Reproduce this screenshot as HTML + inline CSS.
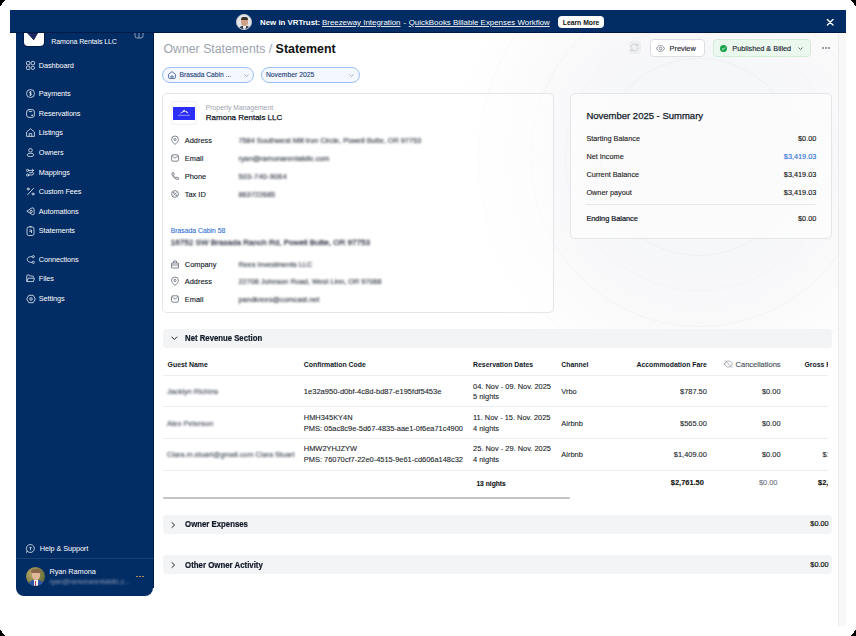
<!DOCTYPE html>
<html><head><meta charset="utf-8">
<style>
*{box-sizing:border-box;margin:0;padding:0}
html,body{width:856px;height:636px;overflow:hidden;background:#fff}
body{position:relative;font-family:"Liberation Sans",sans-serif;color:#111827}
.a{position:absolute}
.t{position:absolute;white-space:nowrap;line-height:12px;height:12px}
.nav{color:#fff;font-size:7.3px;letter-spacing:-0.08px}
.blur{color:#2b323d;filter:blur(0.8px);-webkit-text-stroke:0}
.lbl{font-size:7.4px;color:#111827;-webkit-text-stroke:0.12px #111827}
.val{font-size:7.3px;-webkit-text-stroke:0.12px currentColor}
.th{font-size:6.9px;font-weight:bold;color:#111827}
.td{font-size:7.45px;color:#1a1f2b;-webkit-text-stroke:0.1px currentColor}
.ico{position:absolute;overflow:visible}
</style></head><body>

<!-- main background -->
<div class="a" style="left:153px;top:33px;width:693px;height:593px;background:radial-gradient(circle at 546px 124px,#f5f6f8 0px,#f6f7f8 100px,#f8f8fa 135px,#fafafb 172px,#fdfdfd 215px,#ffffff 250px)"></div>
<!-- decorative circles -->
<div class="a" style="left:153px;top:33px;width:685px;height:593px;overflow:hidden">
  <div class="a" style="left:447.4px;top:25.4px;width:197.2px;height:197.2px;border:1px solid rgba(215,220,235,.28);border-radius:50%"></div>
  <div class="a" style="left:411.8px;top:-10.2px;width:268.4px;height:268.4px;border:1px solid rgba(215,220,235,.18);border-radius:50%"></div>
  <div class="a" style="left:376.5px;top:-45.5px;width:339px;height:339px;border:1px solid rgba(215,220,235,.22);border-radius:50%"></div>
  <div class="a" style="left:325px;top:-97px;width:442px;height:442px;border:1px solid rgba(215,220,235,.18);border-radius:50%"></div>
</div>
<!-- sidebar -->
<div class="a" style="left:16px;top:10px;width:137.3px;height:586.2px;background:#022c64;border-radius:0 0 8px 8px"></div>
<div class="a" style="left:152.6px;top:33px;width:1px;height:555px;background:#001a4d"></div>
<!-- logo -->
<div class="a" style="left:23.5px;top:24px;width:20.7px;height:21.8px;background:#fff;border-radius:4px;box-shadow:0 0 0 1px #001a4a"></div>
<svg class="ico" style="left:20px;top:30px" width="30" height="20" viewBox="0 0 30 20"><path d="M7.6 3 L17.6 3 L13.7 9.8 Z" fill="#1f2a64" stroke="#0b1446" stroke-width="0.8" stroke-linejoin="round"/></svg>
<div class="t nav" style="left:51.3px;top:35.8px;font-size:7px">Ramona Rentals LLC</div>
<svg class="ico" style="left:134px;top:30px" width="10" height="10" viewBox="0 0 10 10" fill="none" stroke="#9aa6c0" stroke-width="0.9"><rect x="1" y="-2" width="8" height="10" rx="2"/><path d="M5 -2 V8"/></svg>

<!-- nav icons -->
<svg class="ico" style="left:26px;top:61px" width="9" height="9" viewBox="0 0 9 9" fill="none" stroke="#e8ecf3" stroke-width="0.8"><rect x="0.5" y="0.5" width="3.3" height="3.3" rx="0.8"/><rect x="5.2" y="0.5" width="3.3" height="3.3" rx="0.8"/><rect x="0.5" y="5.2" width="3.3" height="3.3" rx="0.8"/><rect x="5.2" y="5.2" width="3.3" height="3.3" rx="1.6"/></svg>
<div class="t nav" style="left:38.8px;top:59.9px">Dashboard</div>

<svg class="ico" style="left:26px;top:89px" width="9" height="9" viewBox="0 0 9 9" fill="none" stroke="#e8ecf3" stroke-width="0.8"><circle cx="4.5" cy="4.5" r="4"/><path d="M5.6 3.2 C5.2 2.6 3.4 2.6 3.4 3.6 C3.4 4.6 5.6 4.2 5.6 5.4 C5.6 6.4 3.6 6.4 3.3 5.8 M4.5 2.2 V6.8"/></svg>
<div class="t nav" style="left:38.8px;top:87.7px">Payments</div>

<svg class="ico" style="left:26px;top:108.5px" width="9" height="9" viewBox="0 0 9 9" fill="none" stroke="#e8ecf3" stroke-width="0.8" stroke-linecap="round"><rect x="0.6" y="0.6" width="7.8" height="7.8" rx="2.4"/><path d="M3.2 2.6 H5.8"/><circle cx="6" cy="6.2" r="0.35" fill="#e8ecf3"/></svg>
<div class="t nav" style="left:38.8px;top:107.5px">Reservations</div>

<svg class="ico" style="left:26px;top:128px" width="9" height="9" viewBox="0 0 9 9" fill="none" stroke="#e8ecf3" stroke-width="0.8"><path d="M0.6 4 L4.5 0.7 L8.4 4 V8.4 H0.6 Z"/><path d="M3.2 8.4 V5.6 H5.8 V8.4"/></svg>
<div class="t nav" style="left:38.8px;top:127.1px">Listings</div>

<svg class="ico" style="left:26px;top:148px" width="9" height="9" viewBox="0 0 9 9" fill="none" stroke="#e8ecf3" stroke-width="0.8"><circle cx="4.5" cy="2.3" r="1.8"/><ellipse cx="4.5" cy="6.9" rx="3.3" ry="1.7"/></svg>
<div class="t nav" style="left:38.8px;top:146.7px">Owners</div>

<svg class="ico" style="left:26px;top:167.5px" width="9" height="9" viewBox="0 0 9 9" fill="none" stroke="#e8ecf3" stroke-width="0.8" stroke-linecap="round" stroke-linejoin="round"><circle cx="1.6" cy="2.4" r="1.1"/><circle cx="1.6" cy="7" r="1.1"/><path d="M2.7 2.4 H7.6 M6.4 1.2 L7.6 2.4 L6.4 3.6 M2.7 7 H5 Q7.8 7 7.8 5.6 Q7.8 4.6 6.4 4.6 H3.5"/></svg>
<div class="t nav" style="left:38.8px;top:166.5px">Mappings</div>

<svg class="ico" style="left:26px;top:187px" width="9" height="9" viewBox="0 0 9 9" fill="none" stroke="#e8ecf3" stroke-width="0.8" stroke-linecap="round"><path d="M7.6 1.2 L1.6 7.8"/><circle cx="2.2" cy="2" r="1"/><circle cx="7" cy="7" r="1"/></svg>
<div class="t nav" style="left:38.8px;top:186.2px">Custom Fees</div>

<svg class="ico" style="left:26px;top:206.5px" width="9" height="9" viewBox="0 0 9 9" fill="none" stroke="#e8ecf3" stroke-width="0.8" stroke-linejoin="round"><path d="M0.8 4.2 L6 0.9 Q7.8 0.4 8 2.2 L8.2 6.6 Q8 8.2 6.4 7.6 Z"/><circle cx="5.2" cy="4.4" r="1.1"/></svg>
<div class="t nav" style="left:38.8px;top:205.8px">Automations</div>

<svg class="ico" style="left:26px;top:226px" width="9" height="10" viewBox="0 0 9 10" fill="none" stroke="#e8ecf3" stroke-width="0.8"><rect x="1" y="1" width="7" height="8.5" rx="1.8"/><path d="M3.3 0.6 H5.7 M3.5 4 H5.5 V7 M3.5 5.5 H4.8"/></svg>
<div class="t nav" style="left:38.8px;top:225.3px">Statements</div>

<svg class="ico" style="left:26px;top:254.5px" width="9" height="9" viewBox="0 0 9 9" fill="none" stroke="#e8ecf3" stroke-width="0.8"><path d="M6.1 1.6 C3.5 1.4 1.2 2.6 1.2 4.5 C1.2 6.4 3.5 7.6 6.1 7.4"/><circle cx="7.3" cy="1.7" r="1.1"/><circle cx="7.3" cy="7.3" r="1.1"/></svg>
<div class="t nav" style="left:38.8px;top:253.7px">Connections</div>

<svg class="ico" style="left:26px;top:274px" width="9" height="9" viewBox="0 0 9 9" fill="none" stroke="#e8ecf3" stroke-width="0.8" stroke-linejoin="round"><path d="M0.8 7.6 V1.8 Q0.8 1 1.6 1 H3.2 L4.2 2 H6.6 Q7.4 2 7.4 2.8 V3.6"/><path d="M0.8 7.6 L2.2 4.2 H8.4 L7.4 7.6 Z"/></svg>
<div class="t nav" style="left:38.8px;top:273.2px">Files</div>

<svg class="ico" style="left:25.5px;top:293.5px" width="10" height="10" viewBox="0 0 10 10" fill="none" stroke="#e8ecf3" stroke-width="0.8" stroke-linejoin="round"><path d="M0.7 5 L2.8 1.3 H7.2 L9.3 5 L7.2 8.7 H2.8 Z"/><circle cx="5" cy="5" r="1.3"/></svg>
<div class="t nav" style="left:38.8px;top:293.0px">Settings</div>

<svg class="ico" style="left:25.8px;top:543.8px" width="9" height="9" viewBox="0 0 9 9" fill="none" stroke="#e8ecf3" stroke-width="0.8"><path d="M4.5 0.5 A4 4 0 1 1 1.5 7.3 L0.6 8.5 L1 6.6 A4 4 0 0 1 4.5 0.5 Z"/><path d="M4.5 6.3 V3.2 M3.3 4.2 L4.5 2.9 L5.7 4.2"/></svg>
<div class="t nav" style="left:39.8px;top:542.9px;font-size:7.3px">Help &amp; Support</div>
<div class="a" style="left:16px;top:558px;width:137.5px;height:1px;background:#1e4173"></div>

<!-- avatar -->
<div class="a" style="left:25.5px;top:567px;width:19px;height:19px;border-radius:50%;background:radial-gradient(circle at 30% 35%,#b9a46a 0,#8e8a4c 40%,#5f6a3a 80%);overflow:hidden">
  <div class="a" style="left:6px;top:3px;width:8.5px;height:10px;border-radius:45%;background:#e2b79a"></div>
  <div class="a" style="left:5.5px;top:2px;width:9.5px;height:4px;border-radius:5px 5px 2px 2px;background:#8a6a4a"></div>
  <div class="a" style="left:2px;top:13px;width:16px;height:8px;border-radius:6px 6px 0 0;background:#2e55a8"></div>
  <div class="a" style="left:8.5px;top:13px;width:3.5px;height:6px;background:#f4f4f6"></div>
  <div class="a" style="left:9.6px;top:14px;width:1.3px;height:5px;background:#b03a5a"></div>
</div>
<div class="t nav" style="left:49.4px;top:566.3px;font-size:7.35px;letter-spacing:-0.05px">Ryan Ramona</div>
<div class="t blur" style="left:49.4px;top:576px;font-size:6.75px;color:#8d9bb8">ryan@ramonarentalsllc.c...</div>
<div class="a" style="left:136px;top:575.6px;width:1.6px;height:1.6px;border-radius:50%;background:#c49a5e"></div>
<div class="a" style="left:139px;top:575.6px;width:1.6px;height:1.6px;border-radius:50%;background:#c49a5e"></div>
<div class="a" style="left:142px;top:575.6px;width:1.6px;height:1.6px;border-radius:50%;background:#c49a5e"></div>

<!-- banner -->
<div class="a" style="left:10px;top:10px;width:836px;height:23px;background:#022c64;border-bottom:1px solid #001a48"></div>
<div class="a" style="left:236.4px;top:14.1px;width:15.8px;height:15.8px;border-radius:50%;background:#e4e5e8;border:1px solid #c9ccd2;overflow:hidden">
  <div class="a" style="left:0.5px;top:10.5px;width:13px;height:6px;border-radius:5px 5px 0 0;background:#2a3347"></div>
  <div class="a" style="left:5.2px;top:10.5px;width:3.6px;height:3.5px;background:#eef1f5;border-radius:0 0 2px 2px"></div>
  <div class="a" style="left:3.6px;top:2.6px;width:6.8px;height:8.6px;border-radius:48%;background:#cf9f86"></div>
  <div class="a" style="left:3.4px;top:1.8px;width:7.2px;height:3px;border-radius:4px 4px 1px 1px;background:#3a2c26"></div>
</div>
<div class="t" style="left:260.1px;top:16.7px;font-size:7.85px;font-weight:bold;color:#fff">New in VRTrust:</div>
<div class="t" style="left:322px;top:16.7px;font-size:7.9px;color:#fff;text-decoration:underline;text-decoration-color:rgba(255,255,255,.85);text-underline-offset:1px">Breezeway Integration</div>
<div class="t" style="left:403.5px;top:16.7px;font-size:7.9px;color:#fff">-</div>
<div class="t" style="left:408.7px;top:16.7px;font-size:7.9px;color:#fff;text-decoration:underline;text-decoration-color:rgba(255,255,255,.85);text-underline-offset:1px">QuickBooks Billable Expenses Workflow</div>
<div class="a" style="left:558.2px;top:16px;width:45.8px;height:12.3px;background:#fff;border-radius:4px"></div>
<div class="t" style="left:558.2px;top:16.7px;width:45.8px;text-align:center;font-size:6.8px;font-weight:bold;color:#111">Learn More</div>
<svg class="ico" style="left:826px;top:17.6px" width="9" height="9" viewBox="0 0 9 9" fill="none" stroke="#fff" stroke-width="1.35" stroke-linecap="round"><path d="M1.4 1.4 L7 7 M7 1.4 L1.4 7"/></svg>

<!-- vertical scrollbar -->
<div class="a" style="left:838px;top:34px;width:8px;height:592px;background:#f8f8f8;border-left:1px solid #ececec"></div>

<!-- title -->
<div class="t" style="left:163.5px;top:41.5px;height:14px;line-height:14px;font-size:12.3px;color:#9ca3af">Owner Statements / <span style="color:#111;font-weight:bold;font-size:12.45px">Statement</span></div>

<!-- pills -->
<div class="a" style="left:162.4px;top:66.9px;width:91.2px;height:15.9px;border:1px solid #98c0f4;border-radius:8px;background:#f4f8fe"></div>
<svg class="ico" style="left:168.3px;top:70.8px" width="8" height="8" viewBox="0 0 8 8" fill="none" stroke="#274a85" stroke-width="0.75" stroke-linejoin="round"><path d="M0.6 3.3 L4 0.6 L7.4 3.3 V6.6 Q7.4 7.4 6.6 7.4 H1.4 Q0.6 7.4 0.6 6.6 Z"/><path d="M3 7.4 V5 H5 V7.4"/></svg>
<div class="t" style="left:179.5px;top:69.4px;font-size:6.7px;color:#1e3f7a;-webkit-text-stroke:0.12px #1e3f7a">Brasada Cabin ...</div>
<svg class="ico" style="left:243.5px;top:73.5px" width="5" height="3" viewBox="0 0 5 3" fill="none" stroke="#7b8fb5" stroke-width="0.7"><path d="M0.5 0.5 L2.5 2.5 L4.5 0.5"/></svg>
<div class="a" style="left:261px;top:66.9px;width:98.9px;height:15.9px;border:1px solid #98c0f4;border-radius:8px;background:#f4f8fe"></div>
<div class="t" style="left:265.9px;top:69.4px;font-size:6.8px;color:#1e3f7a;-webkit-text-stroke:0.12px #1e3f7a">November 2025</div>
<svg class="ico" style="left:349.3px;top:73.5px" width="5" height="3" viewBox="0 0 5 3" fill="none" stroke="#7b8fb5" stroke-width="0.7"><path d="M0.5 0.5 L2.5 2.5 L4.5 0.5"/></svg>

<!-- action buttons -->
<div class="a" style="left:628.6px;top:41.2px;width:12.8px;height:12.8px;border-radius:3px;background:#f0f1f3;border:1px solid #eceef1"></div>
<svg class="ico" style="left:630.3px;top:43.2px" width="9" height="9" viewBox="0 0 9 9" fill="none" stroke="#c4c7cc" stroke-width="0.8" stroke-linecap="round"><path d="M0.9 4.2 A3.6 3.6 0 0 1 7.6 2.6 M8.1 4.8 A3.6 3.6 0 0 1 1.4 6.4 M7.9 0.9 V2.7 H6.1 M1.1 8.1 V6.3 H2.9"/></svg>
<div class="a" style="left:649.6px;top:39.3px;width:55.7px;height:17.7px;border:1px solid #dcdfe4;border-radius:4px;background:#fff"></div>
<svg class="ico" style="left:656px;top:44.7px" width="9" height="7" viewBox="0 0 9 7" fill="none" stroke="#6b7280" stroke-width="0.75"><path d="M0.5 3.5 C1.7 1.2 3 0.5 4.5 0.5 C6 0.5 7.3 1.2 8.5 3.5 C7.3 5.8 6 6.5 4.5 6.5 C3 6.5 1.7 5.8 0.5 3.5 Z"/><circle cx="4.5" cy="3.5" r="1.3"/></svg>
<div class="t" style="left:669.6px;top:43.2px;font-size:7.35px;color:#1f2937;-webkit-text-stroke:0.15px #1f2937">Preview</div>
<div class="a" style="left:713px;top:39.3px;width:97.7px;height:17.7px;border:1px solid #d3ecd9;border-radius:4px;background:#ebf8ee"></div>
<div class="a" style="left:719.7px;top:44.6px;width:7px;height:7px;border-radius:50%;background:#16a34a"></div>
<svg class="ico" style="left:719.7px;top:44.6px" width="7" height="7" viewBox="0 0 7 7" fill="none" stroke="#fff" stroke-width="0.9"><path d="M2 3.6 L3.1 4.6 L5 2.5"/></svg>
<div class="t" style="left:732.3px;top:43.2px;font-size:7.3px;color:#1f2937;-webkit-text-stroke:0.15px #1f2937">Published &amp; Billed</div>
<svg class="ico" style="left:797.8px;top:47px" width="6" height="4" viewBox="0 0 6 4" fill="none" stroke="#4b5563" stroke-width="0.85"><path d="M0.5 0.5 L2.5 2.5 L4.5 0.5"/></svg>
<div class="a" style="left:822px;top:47.4px;width:1.8px;height:1.8px;border-radius:50%;background:#7d838c"></div>
<div class="a" style="left:825px;top:47.4px;width:1.8px;height:1.8px;border-radius:50%;background:#7d838c"></div>
<div class="a" style="left:828px;top:47.4px;width:1.8px;height:1.8px;border-radius:50%;background:#7d838c"></div>

<!-- left card -->
<div class="a" style="left:162.4px;top:92.5px;width:391.6px;height:220.7px;border:1px solid #e4e6ea;border-radius:5px;background:rgba(255,255,255,.55)"></div>
<div class="a" style="left:171.1px;top:101.1px;width:26.3px;height:24.3px;border:1px solid #f0f1f4;border-radius:4px;background:#fff"></div>
<div class="a" style="left:173.4px;top:107px;width:21.9px;height:12.5px;background:#2d2dfa"></div>
<svg class="ico" style="left:173.4px;top:107px" width="22" height="13" viewBox="0 0 22 13"><path d="M6.5 6.4 L8.5 5.2 L9.6 4.6 L11.2 2.4 L12.6 4.4 L13.6 4 L15.6 6.4 L13.4 5.6 L12.2 4.8 L11 4.6 L9.8 5.6 Z" fill="#fff"/><path d="M5 8.3 H17" stroke="#d8dcff" stroke-width="0.6"/></svg>
<div class="t" style="left:205.8px;top:101.6px;font-size:6.8px;color:#9ca3af">Property Management</div>
<div class="t" style="left:205.8px;top:112.2px;font-size:8px;color:#111827;-webkit-text-stroke:0.25px #111827">Ramona Rentals LLC</div>

<!-- rows -->
<svg class="ico" style="left:170.9px;top:136px" width="8" height="9" viewBox="0 0 8 9" fill="none" stroke="#4b5563" stroke-width="0.7"><path d="M4 8.5 C1.5 6 0.6 4.8 0.6 3.4 A3.4 3.4 0 0 1 7.4 3.4 C7.4 4.8 6.5 6 4 8.5 Z"/><circle cx="4" cy="3.5" r="1.1"/></svg>
<div class="t lbl" style="left:184.8px;top:135.0px">Address</div>
<div class="t val blur" style="left:238.5px;top:135.0px">7584 Southwest Mill Iron Circle, Powell Butte, OR 97753</div>

<svg class="ico" style="left:170.9px;top:154.3px" width="8" height="8" viewBox="0 0 8 8" fill="none" stroke="#4b5563" stroke-width="0.7"><rect x="0.5" y="0.8" width="7" height="6.4" rx="1.5"/><path d="M1.2 2 L4 4.2 L6.8 2"/></svg>
<div class="t lbl" style="left:184.8px;top:153.0px">Email</div>
<div class="t val blur" style="left:238.5px;top:153.0px">ryan@ramonarentalsllc.com</div>

<svg class="ico" style="left:170.9px;top:172.2px" width="8" height="8" viewBox="0 0 8 8" fill="none" stroke="#4b5563" stroke-width="0.7"><path d="M1 0.8 L2.6 0.8 L3.3 2.6 L2.4 3.4 C3 4.6 3.8 5.4 5 6 L5.7 5.1 L7.4 5.8 V7.4 C4 7.6 0.6 4.2 1 0.8 Z"/></svg>
<div class="t lbl" style="left:184.8px;top:170.9px">Phone</div>
<div class="t val blur" style="left:238.5px;top:170.9px;letter-spacing:0.25px">503-740-9064</div>

<svg class="ico" style="left:170.9px;top:189.9px" width="8" height="8" viewBox="0 0 8 8" fill="none" stroke="#4b5563" stroke-width="0.7"><circle cx="4" cy="4" r="3.4"/><path d="M5.5 2.5 L2.5 5.5"/><circle cx="2.8" cy="2.8" r="0.5"/><circle cx="5.2" cy="5.2" r="0.5"/></svg>
<div class="t lbl" style="left:184.8px;top:188.6px">Tax ID</div>
<div class="t val blur" style="left:238.5px;top:188.6px">863722685</div>

<div class="t" style="left:170.8px;top:224.9px;font-size:6.8px;color:#2f6fd6;-webkit-text-stroke:0.1px #2f6fd6">Brasada Cabin 58</div>
<div class="t blur" style="left:170.8px;top:236.8px;font-size:8.1px;color:#3a414c;-webkit-text-stroke:0.3px #3a414c;filter:blur(0.85px)">16752 SW Brasada Ranch Rd, Powell Butte, OR 97753</div>

<svg class="ico" style="left:170.9px;top:259.6px" width="8" height="9" viewBox="0 0 8 9" fill="none" stroke="#4b5563" stroke-width="0.7"><path d="M0.6 3 H7.4 V8 H0.6 Z M2.6 3 V1 H5.4 V3 M0.6 5 H7.4"/></svg>
<div class="t lbl" style="left:184.8px;top:258.5px">Company</div>
<div class="t val blur" style="left:238.5px;top:258.5px">Rees Investments LLC</div>

<svg class="ico" style="left:170.9px;top:277.2px" width="8" height="9" viewBox="0 0 8 9" fill="none" stroke="#4b5563" stroke-width="0.7"><path d="M4 8.5 C1.5 6 0.6 4.8 0.6 3.4 A3.4 3.4 0 0 1 7.4 3.4 C7.4 4.8 6.5 6 4 8.5 Z"/><circle cx="4" cy="3.5" r="1.1"/></svg>
<div class="t lbl" style="left:184.8px;top:276.2px">Address</div>
<div class="t val blur" style="left:238.5px;top:276.2px">22708 Johnson Road, West Linn, OR 97068</div>

<svg class="ico" style="left:170.9px;top:295.2px" width="8" height="8" viewBox="0 0 8 8" fill="none" stroke="#4b5563" stroke-width="0.7"><rect x="0.5" y="0.8" width="7" height="6.4" rx="1.5"/><path d="M1.2 2 L4 4.2 L6.8 2"/></svg>
<div class="t lbl" style="left:184.8px;top:293.9px">Email</div>
<div class="t val blur" style="left:238.5px;top:293.9px">pandkrees@comcast.net</div>

<!-- right card -->
<div class="a" style="left:569.8px;top:92.5px;width:262.6px;height:146.5px;border:1px solid #e4e6ea;border-radius:5px;background:rgba(255,255,255,.55)"></div>
<div class="t" style="left:586.4px;top:110.2px;font-size:9.5px;color:#111827;-webkit-text-stroke:0.25px #111827">November 2025 - Summary</div>
<div class="t val" style="left:586.4px;top:132.9px;color:#222">Starting Balance</div>
<div class="t val" style="left:716px;top:132.9px;width:100.3px;text-align:right;color:#111">$0.00</div>
<div class="t val" style="left:586.4px;top:150.8px;color:#222">Net Income</div>
<div class="t val" style="left:716px;top:150.8px;width:100.3px;text-align:right;color:#2f6fd6">$3,419.03</div>
<div class="t val" style="left:586.4px;top:168.5px;color:#222">Current Balance</div>
<div class="t val" style="left:716px;top:168.5px;width:100.3px;text-align:right;color:#111">$3,419.03</div>
<div class="t val" style="left:586.4px;top:186.7px;color:#222">Owner payout</div>
<div class="t val" style="left:716px;top:186.7px;width:100.3px;text-align:right;color:#111">$3,419.03</div>
<div class="a" style="left:586.4px;top:204.2px;width:229.9px;height:1px;background:#e5e7eb"></div>
<div class="t val" style="left:586.4px;top:212.5px;color:#111827;font-size:7.35px;-webkit-text-stroke:0.22px #111827">Ending Balance</div>
<div class="t val" style="left:716px;top:212.5px;width:100.3px;text-align:right;color:#111">$0.00</div>

<!-- net revenue section -->
<div class="a" style="left:163px;top:348px;width:675px;height:160px;background:#fff"></div>
<div class="a" style="left:163px;top:328.8px;width:669.4px;height:19.2px;border-radius:4px;background:#f3f4f6"></div>
<svg class="ico" style="left:170.6px;top:336.3px" width="7" height="5" viewBox="0 0 7 5" fill="none" stroke="#222" stroke-width="1" stroke-linecap="round" stroke-linejoin="round"><path d="M0.8 1 L3.3 3.5 L5.8 1"/></svg>
<div class="t" style="left:185.1px;top:333.4px;font-size:7.75px;font-weight:bold;color:#111827;-webkit-text-stroke:0.2px #111827;transform:scaleY(1.14);transform-origin:0 7px">Net Revenue Section</div>

<!-- table -->
<div class="a" style="left:163px;top:353px;width:665px;height:140px;overflow:hidden">
  <div class="t th" style="left:4.6px;top:5.8px">Guest Name</div>
  <div class="t th" style="left:140.8px;top:5.9px">Confirmation Code</div>
  <div class="t th" style="left:310px;top:5.9px">Reservation Dates</div>
  <div class="t th" style="left:398.3px;top:5.9px">Channel</div>
  <div class="t th" style="left:443.9px;top:5.9px;width:100px;text-align:right">Accommodation Fare</div>
  <svg class="ico" style="left:560.8px;top:7.3px" width="9" height="8" viewBox="0 0 9 8" fill="none" stroke="#8a8f98" stroke-width="0.75" stroke-linecap="round"><path d="M0.5 4 C1.7 1.7 3 1 4.5 1 C6 1 7.3 1.7 8.5 4 C7.3 6.3 6 7 4.5 7 C3 7 1.7 6.3 0.5 4 Z"/><path d="M1.2 0.6 L7.8 7.4"/></svg>
  <div class="t" style="left:517.6px;top:5.9px;width:100px;text-align:right;font-size:7.5px;color:#4d535c;-webkit-text-stroke:0.15px #4d535c">Cancellations</div>
  <div class="t th" style="left:641.5px;top:5.9px">Gross Revenue</div>
  <div class="a" style="left:0;top:22.4px;width:665px;height:1px;background:#eceef1"></div>

  <div class="t td blur" style="left:4px;top:33.1px;color:#3b4250">Jacklyn Richins</div>
  <div class="t td" style="left:140.8px;top:33.2px;font-size:7.55px">1e32a950-d0bf-4c8d-bd87-e195fdf5453e</div>
  <div class="t td" style="left:310px;top:27.7px">04. Nov - 09. Nov. 2025</div>
  <div class="t td" style="left:310px;top:37.8px">5 nights</div>
  <div class="t td" style="left:398.3px;top:33.2px">Vrbo</div>
  <div class="t td" style="left:443.9px;top:33.3px;width:100px;text-align:right">$787.50</div>
  <div class="t td" style="left:517.6px;top:33.3px;width:100px;text-align:right">$0.00</div>
  <div class="a" style="left:0;top:53.1px;width:665px;height:1px;background:#eceef1"></div>

  <div class="t td blur" style="left:4px;top:64.8px;color:#3b4250">Alex Peterson</div>
  <div class="t td" style="left:140.8px;top:59.2px">HMH345KY4N</div>
  <div class="t td" style="left:140.8px;top:70.0px">PMS: 05ac8c9e-5d67-4835-aae1-0f6ea71c4900</div>
  <div class="t td" style="left:310px;top:59.2px">11. Nov - 15. Nov. 2025</div>
  <div class="t td" style="left:310px;top:69.8px">4 nights</div>
  <div class="t td" style="left:398.3px;top:64.8px">Airbnb</div>
  <div class="t td" style="left:443.9px;top:64.8px;width:100px;text-align:right">$565.00</div>
  <div class="t td" style="left:517.6px;top:64.8px;width:100px;text-align:right">$0.00</div>
  <div class="a" style="left:0;top:85.2px;width:665px;height:1px;background:#eceef1"></div>

  <div class="t td blur" style="left:4px;top:96.3px;color:#3b4250;font-size:7.3px">Clara.m.stuart@gmail.com Clara Stuart</div>
  <div class="t td" style="left:140.8px;top:90.4px">HMW2YHJZYW</div>
  <div class="t td" style="left:140.8px;top:101.3px">PMS: 76070cf7-22e0-4515-9e61-cd606a148c32</div>
  <div class="t td" style="left:310px;top:90.4px">25. Nov - 29. Nov. 2025</div>
  <div class="t td" style="left:310px;top:101.1px">4 nights</div>
  <div class="t td" style="left:398.3px;top:96.3px">Airbnb</div>
  <div class="t td" style="left:443.9px;top:96.3px;width:100px;text-align:right">$1,409.00</div>
  <div class="t td" style="left:517.6px;top:96.3px;width:100px;text-align:right">$0.00</div>
  <div class="t td" style="left:659.5px;top:96.3px">$1,409.00</div>
  <div class="a" style="left:0;top:117.1px;width:665px;height:1px;background:#eceef1"></div>

  <div class="t td" style="left:313.4px;top:124.8px;font-weight:bold;font-size:6.7px;color:#111">13 nights</div>
  <div class="t td" style="left:440.9px;top:124.4px;width:100px;text-align:right;font-weight:bold;color:#111">$2,761.50</div>
  <div class="t td" style="left:514.5px;top:124.4px;width:100px;text-align:right;color:#6b7280">$0.00</div>
  <div class="t td" style="left:655px;top:124.4px;font-weight:bold;color:#111">$2,761.50</div>
</div>
<!-- h scrollbar -->
<div class="a" style="left:162.6px;top:496.6px;width:407.3px;height:2.8px;border-radius:2px;background:#c4c4c6"></div>

<!-- owner expenses -->
<div class="a" style="left:163px;top:514.6px;width:669.4px;height:19px;border-radius:4px;background:#f3f4f6"></div>
<svg class="ico" style="left:171px;top:521.8px" width="5" height="6" viewBox="0 0 5 6" fill="none" stroke="#222" stroke-width="1" stroke-linecap="round" stroke-linejoin="round"><path d="M1 0.6 L3.6 3 L1 5.4"/></svg>
<div class="t" style="left:185.1px;top:519.3px;font-size:7.8px;font-weight:bold;color:#111827;-webkit-text-stroke:0.2px #111827;transform:scaleY(1.14);transform-origin:0 7px">Owner Expenses</div>
<div class="t" style="left:728.6px;top:518.1px;width:100px;text-align:right;font-size:7.3px;color:#111;-webkit-text-stroke:0.2px #111">$0.00</div>

<div class="a" style="left:163px;top:555px;width:669.4px;height:19px;border-radius:4px;background:#f3f4f6"></div>
<svg class="ico" style="left:171px;top:562px" width="5" height="6" viewBox="0 0 5 6" fill="none" stroke="#222" stroke-width="1" stroke-linecap="round" stroke-linejoin="round"><path d="M1 0.6 L3.6 3 L1 5.4"/></svg>
<div class="t" style="left:185.1px;top:559.6px;font-size:7.85px;font-weight:bold;color:#111827;-webkit-text-stroke:0.2px #111827;transform:scaleY(1.14);transform-origin:0 7px">Other Owner Activity</div>
<div class="t" style="left:728.6px;top:558.5px;width:100px;text-align:right;font-size:7.3px;color:#111;-webkit-text-stroke:0.2px #111">$0.00</div>

<!-- corners -->
<div class="a" style="left:0;top:0px;width:5px;height:1px;background:#000"></div>
<div class="a" style="right:0;top:0px;width:5px;height:1px;background:#000"></div>
<div class="a" style="left:0;bottom:0px;width:5px;height:1px;background:#000"></div>
<div class="a" style="right:0;bottom:0px;width:5px;height:1px;background:#000"></div>
<div class="a" style="left:0;top:1px;width:4px;height:1px;background:#000"></div>
<div class="a" style="right:0;top:1px;width:4px;height:1px;background:#000"></div>
<div class="a" style="left:0;bottom:1px;width:4px;height:1px;background:#000"></div>
<div class="a" style="right:0;bottom:1px;width:4px;height:1px;background:#000"></div>
<div class="a" style="left:0;top:2px;width:3px;height:1px;background:#000"></div>
<div class="a" style="right:0;top:2px;width:3px;height:1px;background:#000"></div>
<div class="a" style="left:0;bottom:2px;width:3px;height:1px;background:#000"></div>
<div class="a" style="right:0;bottom:2px;width:3px;height:1px;background:#000"></div>
<div class="a" style="left:0;top:3px;width:2px;height:1px;background:#000"></div>
<div class="a" style="right:0;top:3px;width:2px;height:1px;background:#000"></div>
<div class="a" style="left:0;bottom:3px;width:2px;height:1px;background:#000"></div>
<div class="a" style="right:0;bottom:3px;width:2px;height:1px;background:#000"></div>
<div class="a" style="left:0;top:4px;width:2px;height:1px;background:#000"></div>
<div class="a" style="right:0;top:4px;width:2px;height:1px;background:#000"></div>
<div class="a" style="left:0;bottom:4px;width:2px;height:1px;background:#000"></div>
<div class="a" style="right:0;bottom:4px;width:2px;height:1px;background:#000"></div>
<div class="a" style="left:0;top:5px;width:1px;height:1px;background:#000"></div>
<div class="a" style="right:0;top:5px;width:1px;height:1px;background:#000"></div>
<div class="a" style="left:0;bottom:5px;width:1px;height:1px;background:#000"></div>
<div class="a" style="right:0;bottom:5px;width:1px;height:1px;background:#000"></div>
</body></html>
